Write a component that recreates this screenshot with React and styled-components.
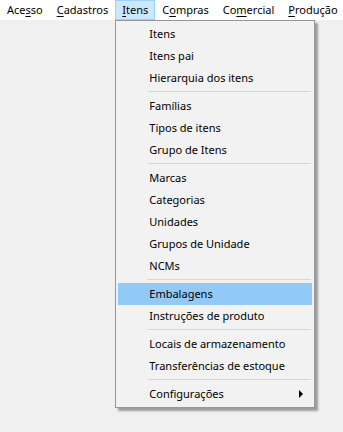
import React from 'react';
import styled, { createGlobalStyle } from 'styled-components';

const GlobalStyle = createGlobalStyle`
  html, body {
    margin: 0;
    padding: 0;
    background: #f0f0f0;
    font-family: "Noto Sans", "Liberation Sans", sans-serif;
    font-size: 11px;
    color: #000;
  }
  #root {
    height: 432px;
  }
`;

const topMenus = [
  { label: 'Acesso', key: 3 },
  { label: 'Cadastros', key: 0 },
  { label: 'Itens', key: 0, open: true },
  { label: 'Compras', key: 1 },
  { label: 'Comercial', key: 2 },
  { label: 'Produção', key: 0 },
];

// null = separator
const itensMenu = [
  'Itens',
  'Itens pai',
  'Hierarquia dos itens',
  null,
  'Famílias',
  'Tipos de itens',
  'Grupo de Itens',
  null,
  'Marcas',
  'Categorias',
  'Unidades',
  'Grupos de Unidade',
  'NCMs',
  null,
  'Embalagens',
  'Instruções de produto',
  null,
  'Locais de armazenamento',
  'Transferências de estoque',
  null,
  'Configurações',
];

const Mnemonic = ({ text, at }) => (
  <>
    {text.slice(0, at)}
    <u>{text[at]}</u>
    {text.slice(at + 1)}
  </>
);

export default function App() {
  return (
    <>
      <GlobalStyle />
      <MenuBar>
        {topMenus.map((m) => (
          <TopItem key={m.label} $open={m.open}>
            <Mnemonic text={m.label} at={m.key} />
            {m.open && (
              <Dropdown>
                {itensMenu.map((item, i) =>
                  item === null ? (
                    <Separator key={i} />
                  ) : (
                    <MenuItem key={item} $active={item === 'Embalagens'}>
                      {item}
                      {item === 'Configurações' && <SubArrow />}
                    </MenuItem>
                  )
                )}
              </Dropdown>
            )}
          </TopItem>
        ))}
      </MenuBar>
    </>
  );
}

const MenuBar = styled.div`
  display: flex;
  height: 20px;
  background: #fff;
  white-space: nowrap;
`;

const TopItem = styled.div`
  position: relative;
  box-sizing: border-box;
  height: 20px;
  line-height: 18px;
  padding: 0 6px;
  border: 1px solid ${({ $open }) => ($open ? '#99d1ff' : 'transparent')};
  background: ${({ $open }) => ($open ? '#cce8ff' : 'transparent')};
  u {
    text-decoration-thickness: 1px;
    text-underline-offset: 2px;
  }
`;

const Dropdown = styled.div`
  position: absolute;
  top: 19px;
  left: -1px;
  width: 200px;
  box-sizing: border-box;
  padding: 2px;
  background: #f2f2f2;
  border: 1px solid #979797;
  box-shadow: 3px 3px 2px rgba(0, 0, 0, 0.35);
  z-index: 10;
`;

const MenuItem = styled.div`
  position: relative;
  height: 22px;
  line-height: 22px;
  padding-left: 31px;
  background: ${({ $active }) => ($active ? '#91c9f7' : 'transparent')};
`;

const Separator = styled.div`
  box-sizing: border-box;
  height: 6px;
  padding-top: 2px;
  margin-left: 29px;
  margin-right: 1px;
  &::after {
    content: '';
    display: block;
    height: 1px;
    background: #d7d7d7;
  }
`;

const SubArrow = styled.span`
  position: absolute;
  right: 9px;
  top: 7px;
  width: 0;
  height: 0;
  border-top: 4px solid transparent;
  border-bottom: 4px solid transparent;
  border-left: 4px solid #000;
`;
